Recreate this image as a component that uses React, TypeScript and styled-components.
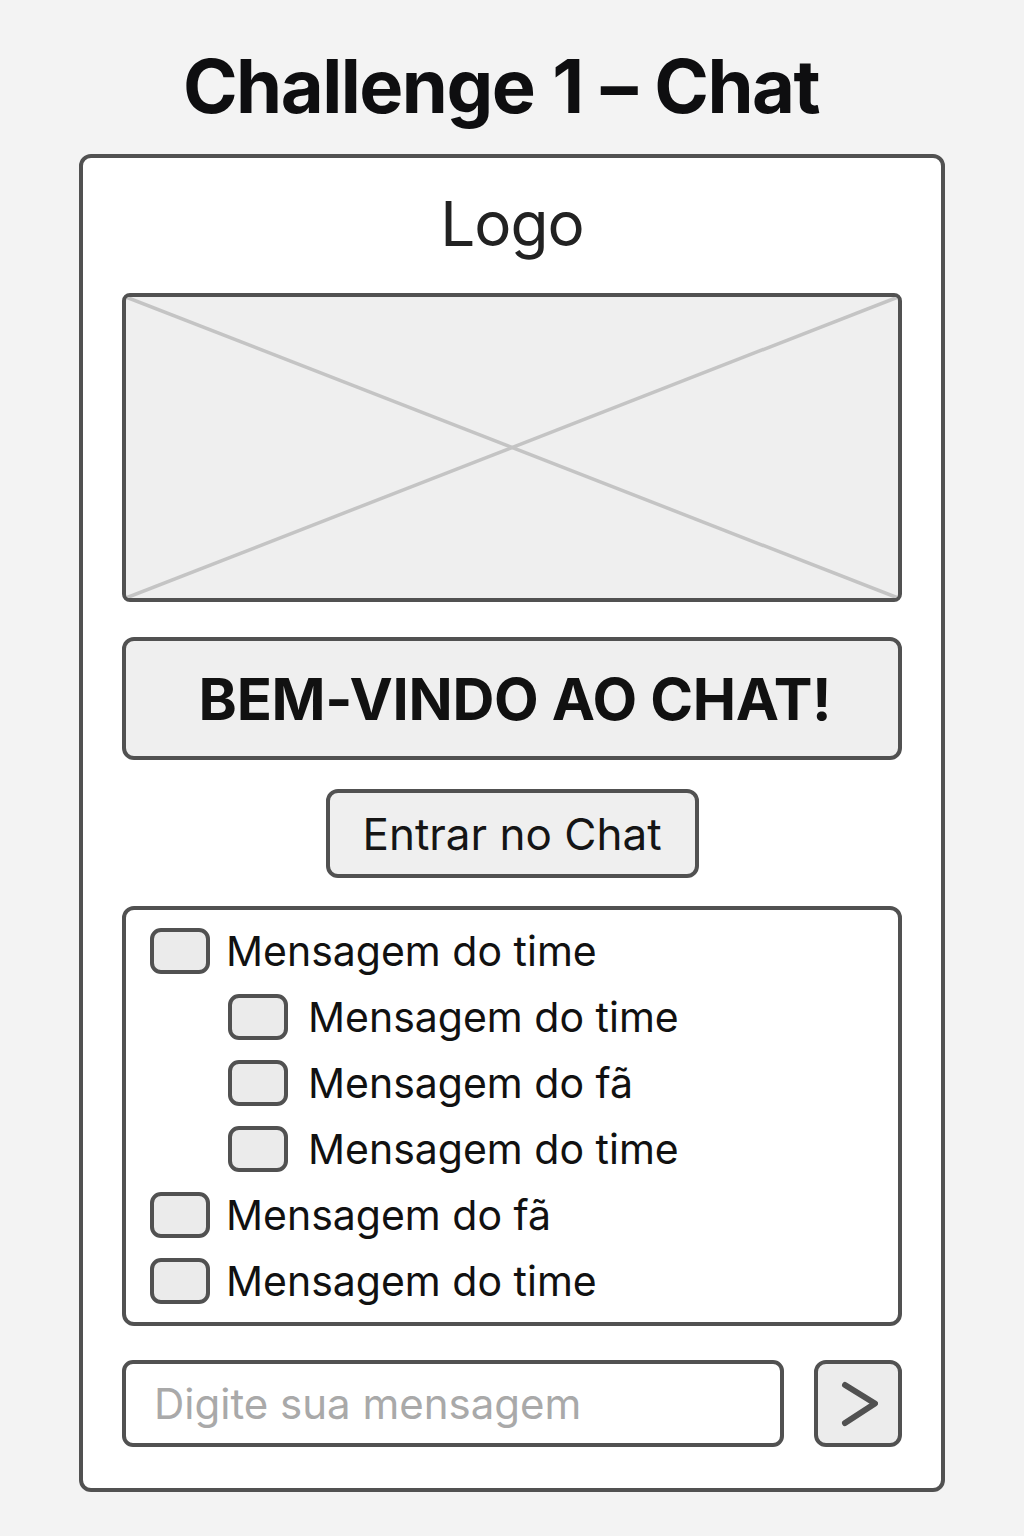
import React from "react";
import styled, { createGlobalStyle } from "styled-components";

const GlobalStyle = createGlobalStyle`
  html, body {
    margin: 0;
    padding: 0;
    background: #f3f3f3;
  }
  body {
    font-family: Inter, "Noto Sans", "Liberation Sans", sans-serif;
    color: #111;
  }
  * { box-sizing: border-box; }
`;

const Page = styled.div`
  display: flex;
  flex-direction: column;
  align-items: center;
  padding-top: 49px;
  padding-bottom: 40px;
`;

const Title = styled.h1`
  margin: 0 22px 0 0;
  font-size: 74px;
  line-height: 1;
  font-weight: 700;
  color: #0e0e10;
  letter-spacing: -1.5px;
  word-spacing: 2px;
`;

const Card = styled.main`
  margin-top: 31px;
  width: 866px;
  background: #fff;
  border: 4px solid #515151;
  border-radius: 12px;
  padding: 35px 39px 41px;
  display: flex;
  flex-direction: column;
  align-items: stretch;
`;

const LogoLabel = styled.div`
  font-size: 62px;
  line-height: 1;
  font-weight: 400;
  color: #222;
  text-align: center;
  letter-spacing: -1px;
`;

const ImagePlaceholder = styled.div`
  margin-top: 38px;
  height: 309px;
  background: #efefef;
  border: 4px solid #515151;
  border-radius: 8px;
  overflow: hidden;
  svg {
    display: block;
    width: 100%;
    height: 100%;
  }
`;

const Banner = styled.div`
  margin-top: 35px;
  height: 123px;
  background: #efefef;
  border: 4px solid #515151;
  border-radius: 12px;
  display: flex;
  align-items: center;
  justify-content: center;
  font-size: 58px;
  line-height: 1;
  font-weight: 700;
  color: #111;
  letter-spacing: -0.3px;
  padding-left: 6px;
`;

const EnterButton = styled.button`
  margin-top: 29px;
  align-self: center;
  width: 373px;
  height: 89px;
  background: #efefef;
  border: 4px solid #515151;
  border-radius: 12px;
  font-family: inherit;
  font-size: 44px;
  line-height: 1;
  font-weight: 400;
  color: #151515;
  display: flex;
  align-items: center;
  justify-content: center;
  padding: 0;
  cursor: pointer;
`;

const MessageList = styled.ul`
  margin: 28px 0 0;
  list-style: none;
  background: #fff;
  border: 4px solid #515151;
  border-radius: 12px;
  padding: 18px 24px;
  display: flex;
  flex-direction: column;
  gap: 20px;
`;

const MessageRow = styled.li<{ $nested?: boolean }>`
  display: flex;
  align-items: center;
  gap: ${(p) => (p.$nested ? "20px" : "16px")};
  padding-left: ${(p) => (p.$nested ? "78px" : "0")};
  height: 46px;
  font-size: 41px;
  line-height: 1;
  color: #111;
`;

const Box = styled.span`
  flex: none;
  width: 60px;
  height: 46px;
  background: #ebebeb;
  border: 4px solid #515151;
  border-radius: 11px;
`;

const InputRow = styled.div`
  margin-top: 34px;
  display: flex;
  gap: 30px;
  height: 87px;
`;

const MessageInput = styled.input`
  flex: 1;
  min-width: 0;
  height: 100%;
  border: 4px solid #515151;
  border-radius: 11px;
  background: #fff;
  padding: 0 28px;
  font-family: inherit;
  font-size: 42px;
  color: #111;
  outline: none;
  &::placeholder {
    color: #a9a9a9;
  }
`;

const SendButton = styled.button`
  flex: none;
  width: 88px;
  height: 100%;
  background: #ececec;
  border: 4px solid #515151;
  border-radius: 12px;
  padding: 0;
  display: flex;
  align-items: center;
  justify-content: center;
  cursor: pointer;
  svg {
    display: block;
  }
`;

const messages: { text: string; nested?: boolean }[] = [
  { text: "Mensagem do time" },
  { text: "Mensagem do time", nested: true },
  { text: "Mensagem do fã", nested: true },
  { text: "Mensagem do time", nested: true },
  { text: "Mensagem do fã" },
  { text: "Mensagem do time" },
];

export default function App() {
  return (
    <>
      <GlobalStyle />
      <Page>
        <Title>Challenge 1 – Chat</Title>
        <Card>
          <LogoLabel>Logo</LogoLabel>
          <ImagePlaceholder>
            <svg viewBox="0 0 100 100" preserveAspectRatio="none">
              <line x1="0" y1="0" x2="100" y2="100" stroke="#c4c4c4" strokeWidth="3.5" vectorEffect="non-scaling-stroke" />
              <line x1="100" y1="0" x2="0" y2="100" stroke="#c4c4c4" strokeWidth="3.5" vectorEffect="non-scaling-stroke" />
            </svg>
          </ImagePlaceholder>
          <Banner>BEM-VINDO AO CHAT!</Banner>
          <EnterButton>Entrar no Chat</EnterButton>
          <MessageList>
            {messages.map((m, i) => (
              <MessageRow key={i} $nested={m.nested}>
                <Box />
                <span>{m.text}</span>
              </MessageRow>
            ))}
          </MessageList>
          <InputRow>
            <MessageInput placeholder="Digite sua mensagem" />
            <SendButton aria-label="Enviar">
              <svg width="40" height="48" viewBox="0 0 40 48">
                <path d="M7 5 L37 23.5 L7 43" fill="none" stroke="#515151" strokeWidth="6" strokeLinecap="round" strokeLinejoin="round" />
              </svg>
            </SendButton>
          </InputRow>
        </Card>
      </Page>
    </>
  );
}
